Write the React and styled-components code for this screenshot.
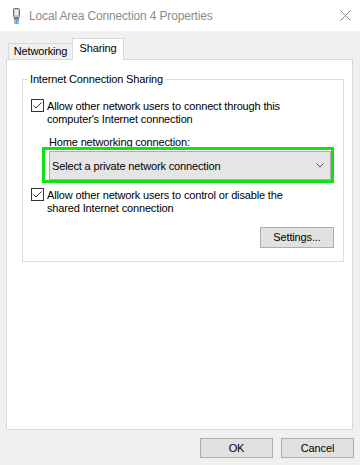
import React from 'react';
import styled, { createGlobalStyle } from 'styled-components';

const GlobalStyle = createGlobalStyle`
  html, body {
    margin: 0;
    padding: 0;
    background: #f0f0f0;
  }
`;

const Window = styled.div`
  width: 360px;
  height: 465px;
  display: flex;
  flex-direction: column;
  background: #f0f0f0;
  font-family: 'Liberation Sans', Arial, sans-serif;
  font-size: 11px;
  letter-spacing: -0.15px;
  color: #000;
  overflow: hidden;
`;

const TitleBar = styled.div`
  height: 31px;
  flex: none;
  display: flex;
  align-items: center;
  padding: 0 9px 0 13px;
  background: #fff;
`;

const Title = styled.div`
  flex: 1;
  margin-left: 9px;
  font-size: 12px;
  color: #8c8c8c;
  white-space: nowrap;
`;

const CloseBox = styled.div`
  width: 11px;
  height: 11px;
  display: flex;
`;

const TabStrip = styled.div`
  height: 28px;
  flex: none;
  display: flex;
  align-items: flex-end;
  padding-left: 8px;
`;

const Tab = styled.div`
  position: relative;
  z-index: ${(p) => (p.$active ? 1 : 0)};
  box-sizing: border-box;
  width: ${(p) => p.$w}px;
  height: ${(p) => (p.$active ? 22 : 16)}px;
  margin-bottom: ${(p) => (p.$active ? -1 : 0)}px;
  margin-left: ${(p) => (p.$active ? -1 : 0)}px;
  padding-bottom: ${(p) => (p.$active ? 3 : 0)}px;
  display: flex;
  align-items: center;
  justify-content: center;
  background: ${(p) => (p.$active ? '#fff' : '#f0f0f0')};
  border: 1px solid #d9d9d9;
  border-bottom: none;
  line-height: 13px;
`;

const Panel = styled.div`
  box-sizing: border-box;
  height: 371px;
  margin: 0 7px 0 6px;
  background: #fff;
  border: 1px solid #d9d9d9;
  padding: 12px 11px 0 15px;
`;

const Group = styled.fieldset`
  margin: 0;
  padding: 13px 9px 13px 8px;
  border: 1px solid #dcdcdc;
  display: flex;
  flex-direction: column;
  align-items: flex-start;
`;

const Legend = styled.legend`
  margin-left: -3px;
  padding: 0 2px;
  line-height: 14px;
`;

const CheckRow = styled.div`
  display: flex;
  align-items: flex-start;
  gap: 3px;
  margin-top: ${(p) => p.$top || 0}px;
`;

const Box = styled.div`
  box-sizing: border-box;
  width: 13px;
  height: 13px;
  flex: none;
  border: 1px solid #333;
  background: #fff;
  display: flex;
`;

const RowText = styled.div`
  line-height: 13px;
  margin-top: 1px;
`;

const FieldLabel = styled.div`
  margin: 10px 0 0 18px;
  line-height: 13px;
`;

const Highlight = styled.div`
  box-sizing: border-box;
  width: 292px;
  height: 36px;
  margin: -2px 0 0 11px;
  border: 3px solid #14e014;
  padding: 1px 0 0 4px;
  display: flex;
`;

const Combo = styled.div`
  flex: 1;
  box-sizing: border-box;
  display: flex;
  align-items: center;
  justify-content: space-between;
  padding: 0 6px 0 2px;
  background: #e5e5e5;
  border: 1px solid #adadad;
`;

const Button = styled.div`
  box-sizing: border-box;
  width: ${(p) => p.$w || 73}px;
  height: ${(p) => p.$h || 20}px;
  display: flex;
  align-items: center;
  justify-content: center;
  background: #e1e1e1;
  border: 1px solid #adadad;
  padding-bottom: 1px;
`;

const SettingsWrap = styled.div`
  align-self: flex-end;
  margin-top: 12px;
`;

const ButtonRow = styled.div`
  display: flex;
  justify-content: flex-end;
  gap: 8px;
  margin-top: 8px;
  padding-right: 6px;
`;

const Check = () => (
  <Box>
    <svg width="11" height="11" viewBox="0 0 11 11">
      <polyline points="1.5,5.5 4,8 9.5,2.5" fill="none" stroke="#333" strokeWidth="1" />
    </svg>
  </Box>
);

const AdapterIcon = () => (
  <svg width="7" height="16" viewBox="0 0 7 16">
    <rect x="0.5" y="0.5" width="6" height="9" rx="1" fill="#c8c8c8" stroke="#6e6e6e" />
    <rect x="2" y="2" width="3" height="5" fill="#eeeeee" />
    <rect x="1" y="10" width="5" height="2" fill="#8a8a8a" />
    <rect x="1.5" y="12" width="1" height="4" fill="#2a7fd4" />
    <rect x="3" y="12" width="1" height="4" fill="#4aa3e8" />
    <rect x="4.5" y="12" width="1" height="4" fill="#2a7fd4" />
  </svg>
);

export default function App() {
  return (
    <>
      <GlobalStyle />
      <Window>
        <TitleBar>
          <AdapterIcon />
          <Title>Local Area Connection 4 Properties</Title>
          <CloseBox>
            <svg width="11" height="11" viewBox="0 0 11 11">
              <path d="M0.5 0.5 L10.5 10.5 M10.5 0.5 L0.5 10.5" stroke="#8a8a8a" strokeWidth="1" />
            </svg>
          </CloseBox>
        </TitleBar>
        <TabStrip>
          <Tab $w={65}>Networking</Tab>
          <Tab $w={52} $active>Sharing</Tab>
        </TabStrip>
        <Panel>
          <Group>
            <Legend>Internet Connection Sharing</Legend>
            <CheckRow>
              <Check />
              <RowText>
                Allow other network users to connect through this
                <br />
                computer's Internet connection
              </RowText>
            </CheckRow>
            <FieldLabel>Home networking connection:</FieldLabel>
            <Highlight>
              <Combo>
                <span>Select a private network connection</span>
                <svg width="8" height="5" viewBox="0 0 8 5">
                  <polyline points="0.5,0.5 4,4 7.5,0.5" fill="none" stroke="#555" strokeWidth="1" />
                </svg>
              </Combo>
            </Highlight>
            <CheckRow $top={5}>
              <Check />
              <RowText>
                Allow other network users to control or disable the
                <br />
                shared Internet connection
              </RowText>
            </CheckRow>
            <SettingsWrap>
              <Button $w={74} $h={21}>Settings...</Button>
            </SettingsWrap>
          </Group>
        </Panel>
        <ButtonRow>
          <Button>OK</Button>
          <Button>Cancel</Button>
        </ButtonRow>
      </Window>
    </>
  );
}
